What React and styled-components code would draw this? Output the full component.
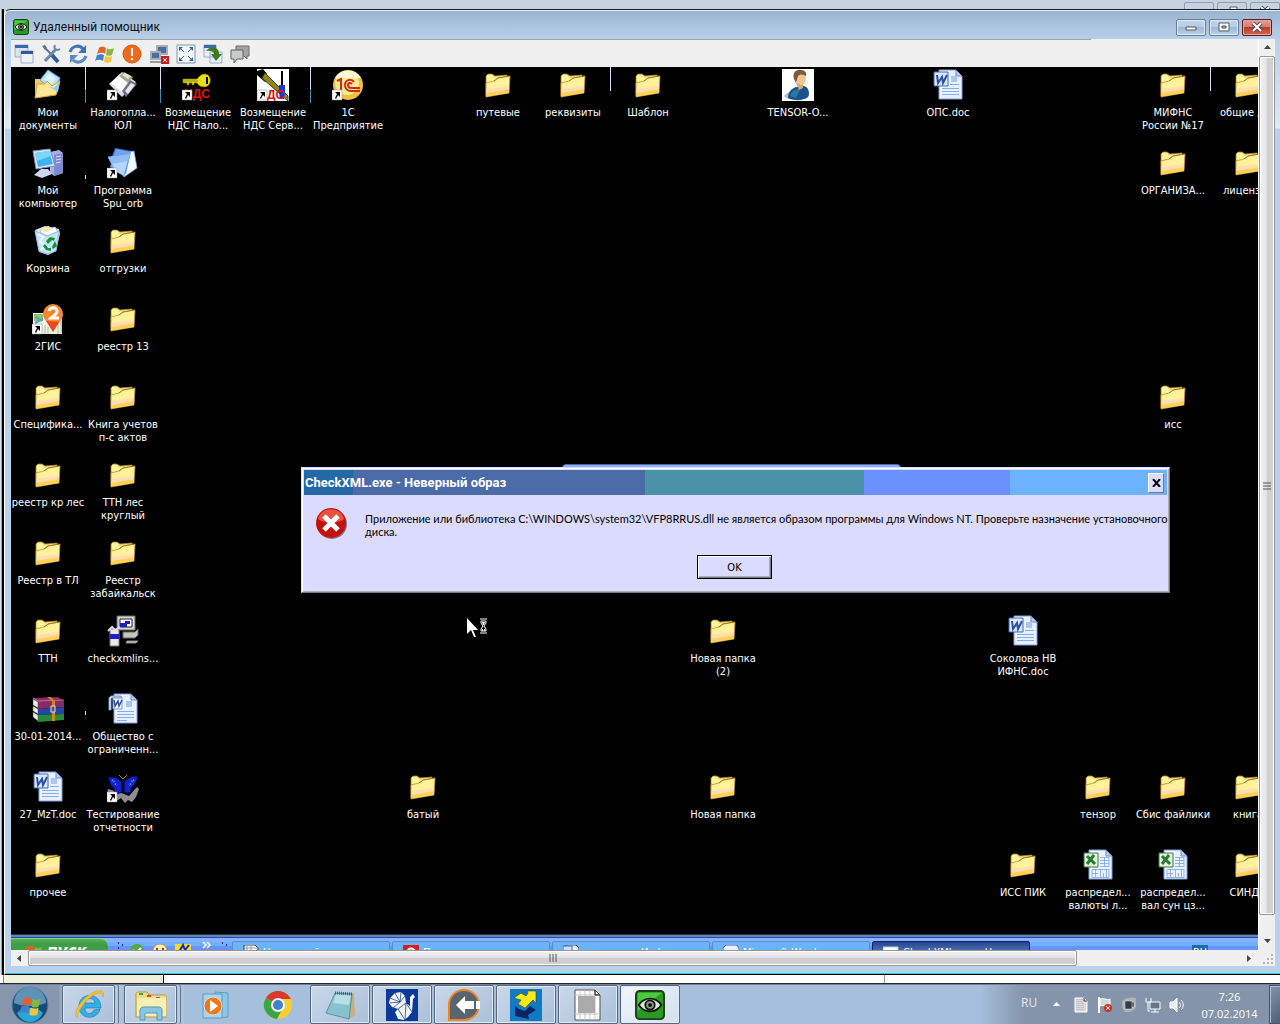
import React from 'react';
import styled, { createGlobalStyle } from 'styled-components';

const GlobalStyle = createGlobalStyle`
    * { box-sizing: border-box; }
    body {
        margin: 0;
        background: #c5d3e0;
        font-family: "Open Sans", "Noto Sans", sans-serif;
        font-size: 12px;
        overflow: hidden;
    }
    button { font: inherit; margin: 0; padding: 0; border: none; background: none; color: inherit; }
    svg { display: block; flex: none; }
`

const tahoma = '"DejaVu Sans Condensed", "DejaVu Sans", "Noto Sans", sans-serif';

const Screen = styled.div`
    min-height: 100vh;
    display: flex;
    flex-direction: column;
`
const BackCaption = styled.div`
    height: 9px;
    padding-top: 2px;
    display: flex;
    justify-content: flex-end;
    gap: 3px;
    overflow: hidden;
    background: #c5d3e0;
`
const Middle = styled.div`
    flex: 1;
    display: flex;
    background: #c5d3e0;
`
const Gutter = styled.div`
    width: 4px;
    border-left: 1px solid #d8e4ee;
    background: linear-gradient(to right, #3fc4e0 1px, #000 1px);
`
const Window = styled.main`
    flex: 1;
    min-width: 0;
    display: flex;
    flex-direction: column;
    padding: 1px 5px 8px 6px;
    border-top: 1px solid #1b1f26;
    border-left: 1px solid #fff;
    border-bottom: 1px solid #000;
    border-top-left-radius: 6px;
    box-shadow: inset 0 -1px 0 #27c9e6, inset 0 1px 0 #e4eef8;
    background: linear-gradient(#99b4d1 0, #b9d1ea 30px, #dde9f6 118px, #b9d1ea 119px);
`
const TitleBar = styled.header`
    height: 28px;
    display: flex;
    align-items: center;
    gap: 4px;
    padding: 4px 3px 0 2px;
`
const Title = styled.h1`
    flex: 1;
    margin: 0;
    font-family: Roboto, "Open Sans", sans-serif;
    font-size: 12px;
    line-height: 16px;
    font-weight: normal;
    color: #0c0c14;
`
const Caption = styled.div`
    display: flex;
    gap: 3px;
`
const CaptionButton = styled.button`
    width: 30px;
    height: 17px;
    flex: none;
    display: flex;
    align-items: center;
    justify-content: center;
    border: 1px solid ${p => p.$close ? '#5b1c22' : '#6b7d93'};
    border-radius: 2px;
    box-shadow: inset 0 0 0 1px ${p => p.$close ? '#e5a799' : '#dce8f4'};
    background: ${p => p.$close
        ? 'linear-gradient(#e0a095 0, #d67f70 45%, #bc3a25 50%, #cf6a50 100%)'
        : 'linear-gradient(#c3d6ea 0, #b6cbe2 45%, #9fb9d5 50%, #b7d0ea 100%)'};
`
const BackButton = styled(CaptionButton)`
    align-items: flex-start;
    padding-top: 3px;
    background: #c5d3e0;
    border-color: #8f9dad;
    box-shadow: none;
`
const Client = styled.div`
    flex: 1;
    min-height: 0;
    display: grid;
    grid-template-columns: minmax(0, 1fr) 17px;
    grid-template-rows: minmax(0, 1fr) 16px;
`
const View = styled.div`
    display: flex;
    flex-direction: column;
    min-height: 0;
`
const Toolbar = styled.div`
    height: 28px;
    display: flex;
    align-items: center;
    gap: 7px;
    padding: 2px 3px 0;
    background: linear-gradient(#a0a0a0, #a0a0a0) no-repeat 0 0 / 1080px 1px, #f0f0f0;
`
const ToolButton = styled.button`
    width: 20px;
    height: 20px;
`
const Desktop = styled.section`
    position: relative;
    flex: 1;
    overflow: hidden;
    padding-top: 2px;
    background: #000;
    color: #fff;
    font-family: ${tahoma};
    font-size: 11px;
    line-height: 13px;
`
const IconGrid = styled.div`
    display: grid;
    grid-template-columns: repeat(17, 74px);
    grid-template-rows: repeat(11, 78px);
    column-gap: 1px;
`
const Shortcut = styled.button`
    grid-column: ${p => p.$col};
    grid-row: ${p => p.$row};
    display: flex;
    flex-direction: column;
    align-items: center;
    gap: 5px;
    white-space: pre;
    text-align: center;
`
const Tick = styled.i`
    position: absolute;
    left: ${p => p.$x}px;
    top: ${p => p.$y}px;
    width: 1px;
    height: ${p => p.$h}px;
    background: ${p => p.$h > 30 ? 'linear-gradient(#dcdcff 60%, #3b8fb5 62%)' : '#dcdcff'};
`
const HiddenWindow = styled.div`
    position: absolute;
    left: 551px;
    right: 357px;
    top: 397px;
    height: 8px;
    border: 1px solid #4a6ba8;
    border-radius: 4px 4px 0 0;
    background: #8cb0ff;
`
const Pointer = styled.div`
    position: absolute;
    left: 455px;
    top: 551px;
`
const Dialog = styled.div`
    position: absolute;
    left: 290px;
    right: 88px;
    top: 400px;
    padding: 1px;
    border: 1px solid;
    border-color: #dad9ff #77778a #77778a #dad9ff;
    box-shadow: inset 1px 1px 0 #fff, inset -1px -1px 0 #adadb5;
    background: #dbdaff;
    color: #000;
`
const DialogTitle = styled.div`
    height: 25px;
    margin: 1px 1px 0;
    padding: 0 3px 0 1px;
    display: flex;
    align-items: center;
    justify-content: space-between;
    color: #fff;
    font-family: Roboto, "Open Sans", sans-serif;
    font-size: 13px;
    font-weight: bold;
    background: linear-gradient(to right, #2369a5 49px, #4a6ba8 49px, #4a6ba8 341px, #4a92a8 341px, #4a92a8 560px, #6b90ff 560px, #6b90ff 706px, #6bb3ff 706px);
`
const DialogClose = styled.button`
    width: 16px;
    height: 20px;
    display: flex;
    align-items: center;
    justify-content: center;
    border: 1px solid;
    border-color: #fff #77778a #77778a #fff;
    background: #dbdaff;
`
const DialogBody = styled.div`
    display: flex;
    gap: 18px;
    padding: 12px 0 0 12px;
`
const Message = styled.p`
    flex: 1;
    margin: 0;
    padding-top: 5px;
    font-family: Lato, "Liberation Sans", Arial, sans-serif;
`
const DialogFooter = styled.div`
    display: flex;
    justify-content: center;
    padding: 16px 2px 12px 0;
`
const OkButton = styled.button`
    width: 75px;
    height: 24px;
    border: 1px solid #000;
    box-shadow: inset 1px 1px 0 #fff, inset -1px -1px 0 #77778a, inset -2px -2px 0 #adadb5;
`
const XpBar = styled.div`
    height: 16px;
    overflow: hidden;
    display: flex;
    background: linear-gradient(#24420f 0, #24420f 1px, #5b85dd 1px, #5b85dd 3px, #2447a3 3px, #2447a3 4px, #8cb0ff 4px, #8cb0ff 8px, #6bb3ff 8px, #6bb3ff 12px, #6b90ff 12px);
    color: #fff;
    font-family: ${tahoma};
    font-size: 11px;
    line-height: 13px;
`
const XpStart = styled.button`
    width: 97px;
    height: 30px;
    margin-top: 4px;
    padding: 4px 0 0 12px;
    display: flex;
    gap: 4px;
    align-items: flex-start;
    border-top: 1px solid #8fcf8f;
    border-radius: 0 8px 0 0;
    background: linear-gradient(#58b058 0, #3f9c45 5px, #48b048 30px);
    font-size: 17px;
    line-height: 17px;
    font-weight: bold;
    font-style: italic;
`
const XpQuick = styled.div`
    width: 124px;
    padding: 8px 0 0 9px;
`
const XpTask = styled.button`
    width: 158px;
    height: 24px;
    margin: 7px 2px 0 0;
    padding: 3px 10px;
    display: flex;
    gap: 4px;
    flex: none;
    border: 1px solid ${p => p.$active ? '#10246b' : '#5c8ec0'};
    border-radius: 2px;
    background: ${p => p.$active ? 'linear-gradient(#23458f, #4a6ba8 8px)' : '#6bb3ff'};
    white-space: nowrap;
    line-height: 15px;
`
const XpLang = styled.span`
    height: 16px;
    margin: 11px 50px 0 auto;
    padding: 1px 1px 0;
    background: #2369a5;
`
const VScroll = styled.div`
    display: flex;
    flex-direction: column;
    align-items: center;
    border-left: 1px solid #fff;
    background: #f0f0f0;
`
const HScroll = styled.div`
    display: flex;
    align-items: center;
    background: #f0f0f0;
`
const Arrow = styled.button`
    width: 17px;
    height: 17px;
    flex: none;
    display: flex;
    align-items: center;
    justify-content: center;
`
const Thumb = styled.div`
    flex: ${p => p.$size};
    align-self: stretch;
    display: flex;
    align-items: center;
    justify-content: center;
    border: 1px solid #979797;
    border-radius: 2px;
    box-shadow: inset 0 0 0 1px #fff;
    background: linear-gradient(${p => p.$vertical ? 'to right' : 'to bottom'}, #f3f3f3 0, #e4e4e6 45%, #cfcfd1 52%, #d2d2d4 100%);
`
const Rest = styled.div`
    flex: ${p => p.$size};
`
const Corner = styled.div`
    display: flex;
    align-items: flex-end;
    justify-content: flex-end;
    background: #f0f0f0;
`
const BackStatus = styled.div`
    height: 9px;
    padding-left: 3px;
    display: flex;
    border-bottom: 1px solid #23272e;
    background: #fff;
`
const StatusCell = styled.div`
    width: 161px;
    border-right: 1px solid #000;
    border-left: 1px solid #8d8d80;
    background: #f0f0dc;
`
const StatusPage = styled.div`
    width: 721px;
    border-right: 1px solid #8aa094;
`
const Taskbar = styled.nav`
    height: 40px;
    display: flex;
    border-top: 1px solid #6e7f96;
    background: linear-gradient(to right, #8596ae 0, #8596ae 58px, #a6bfdc 64px, #a6bfdc calc(100% - 300px), #8394ab calc(100% - 255px));
`
const Start = styled.button`
    width: 60px;
    display: flex;
    align-items: center;
    justify-content: center;
`
const Pins = styled.div`
    flex: 1;
    display: flex;
    gap: 2px;
    padding-left: 2px;
`
const TaskButton = styled.button`
    width: ${p => p.$stack ? 53 : 60}px;
    margin-right: ${p => p.$stack ? 7 : 0}px;
    display: flex;
    align-items: center;
    justify-content: center;
    border: 1px solid ${p => p.$open ? '#56677f' : 'transparent'};
    border-radius: 2px;
    box-shadow: ${p => p.$open ? 'inset 0 0 0 1px #dfe9f4' : 'none'}${p => p.$stack ? ', 3px 0 0 #b6c8de, 4px 0 0 #64758c, 7px 0 0 #b0c4dc' : ''};
    background: ${p => p.$active ? 'linear-gradient(135deg, #f1f6fb, #d3e0ef)' : p.$open ? 'linear-gradient(135deg, #c9d8e9, #aac0da)' : 'none'};
`
const Tray = styled.div`
    display: flex;
    align-items: center;
    color: #fff;
    font-size: 11px;
`
const Lang = styled.span`
    width: 27px;
    padding-bottom: 5px;
    font-size: 12px;
    color: #e2e8ef;
`
const TrayIcons = styled.div`
    display: flex;
    gap: 8px;
    padding-left: 8px;
`
const Clock = styled.time`
    width: 84px;
    padding-left: 5px;
    text-align: center;
    line-height: 17px;
`
const ShowDesktop = styled.button`
    width: 11px;
    align-self: stretch;
    border: 1px solid #46556a;
    border-right: none;
    box-shadow: inset 1px 1px 0 #aebccd;
    background: linear-gradient(135deg, #8495ab, #506076);
`

const Svg = ({ s = 32, box = 32, children }) => (
    <svg width={s} height={s} viewBox={`0 0 ${box} ${box}`} fill="none" aria-hidden="true">{children}</svg>
);

const LinkArrow = () => <>
    <path d="M0 21h10v10H0z" fill="#fff" stroke="#888" strokeWidth=".5" />
    <path d="M3 23h5v5l-2-2-2 4-1-1 2-4z" fill="#000" />
</>;

const Folder = () => (
    <Svg>
        <path d="M4 7l2-2h4l3 2 12-1v17L4 27z" fill="#f9e07c" stroke="#b48a2a" strokeWidth=".7" />
        <path d="M5 9V6h5l2 3 13-2v3L5 13z" fill="#fff59c" />
        <path d="M4 28V14l8-2 4-3 12-2-1 17z" fill="#fff29b" stroke="#c4922b" strokeWidth=".8" />
        <path d="M4.500 24v-4L27 17v3z" fill="#ffdcb8" />
        <path d="M4.500 27.500V24L27 20v4z" fill="#ffd257" />
        <path d="M12 12 16 9l11-2" stroke="#8d6a14" strokeWidth=".8" />
    </Svg>
);

const Documents = () => (
    <Svg>
        <path d="M3 10h9l2 4 14-4-3 15L3 29z" fill="#f5cc65" />
        <path d="m8 11 8-10 12 8-7 13z" fill="#b9e2fb" stroke="#5ea6df" />
        <path d="m12 10 5-6 7 5-5 7z" fill="#d9f3ff" />
        <path d="m3 29 2-14h8l2-3 5 5 8-5-4 14z" fill="#ffe79a" stroke="#d79f34" />
        <path d="m16 17 6 2 6-7-2 11z" fill="#8fcdf5" />
    </Svg>
);

const Computer = () => (
    <Svg>
        <path d="m18 5 9-2 4 3v20l-9 3-4-4z" fill="#a6afe8" />
        <path d="m22 8 9-2v20l-9 3z" fill="#7e8ace" />
        <path d="m24 10 5-1M24 13l5-1M24 16l5-1" stroke="#dde2ff" />
        <path d="m1 4 17-2 5 17-19 3z" fill="#dce4fb" stroke="#8390bd" />
        <path d="m3 6 14-2 4 13-15 3z" fill="#3fb3f1" />
        <path d="m3 6 14-2 2 5-14 5z" fill="#7ad5fb" />
        <path d="M9 22h7l4 5-10 4-8-3z" fill="#cfd6ef" />
    </Svg>
);

const Recycle = () => (
    <Svg>
        <path d="m3 5 10-4 14 3 1 5-4 17-8 4-9-3z" fill="#cfe6f7" />
        <path d="m8 7 5-5 7 1 3-1 3 5-9 5z" fill="#fff" stroke="#bcc6cf" />
        <path d="m9 3 8-2 2 4-7 3z" fill="#f7e8ae" />
        <path d="m3 6 12 5 12-5-3 20-8 3-9-3z" fill="#c6e4fa" fillOpacity=".8" stroke="#8cbbe0" />
        <path d="m6 9 5 3-3 5 5 3-4 5" stroke="#f4faff" strokeWidth="2" />
        <path d="m14 16 4-4 5 1-1 3-2-1-4 4zM23 16l2 5-4 3-1-2 1-2zM13 19l3 4h3v3l-5-1-3-4z" fill="#14942d" />
    </Svg>
);

const Floppies = () => (
    <Svg>
        <path d="m2 15 13-12 14 10-14 15z" fill="#dfdfe3" />
        <path d="m4 14 9-9 10 7-8 11z" fill="#fff" />
        <path d="m12 7 5-4 9 5-5 6z" fill="#a9a58e" />
        <path d="m15 6 3-2 6 3-3 3z" fill="#e8e4cb" />
        <path d="m15 22 8-11 7 4-11 13z" fill="#6e7180" />
        <path d="m18 22 6-8 4 2-7 9z" fill="#e7e7f3" />
        <LinkArrow />
    </Svg>
);

const Spu = () => (
    <Svg>
        <path d="m8 1 17 3 3 5-14 8L5 9z" fill="#3c6fd0" />
        <path d="m22 5 5-1 3 17-13 9-3-5z" fill="#f2f8ff" stroke="#7ba4ea" strokeWidth=".7" />
        <path d="m9 2 15 3-5 22-16-7z" fill="#6ea5f0" />
        <path d="m1 10 22-3-6 22-9-5z" fill="#b5d6fc" stroke="#5c8ee0" strokeWidth=".7" />
        <path d="m1 10 22-3-2 7-16 3z" fill="#8fbef6" />
        <LinkArrow />
    </Svg>
);

const KeyVat = () => (
    <Svg>
        <text x="2" y="29" fill="#e01010" fontFamily="Liberation Sans" fontWeight="bold" fontSize="12">НДС</text>
        <path d="M1 10h14c2-3 5-5 7-5 8-1 9 13 0 13-3 0-5-1-7-4h-3v2h-2v-2H7v2H5v-2H1z" fill="#e8de12" stroke="#6a6408" strokeWidth=".7" />
        <path d="M2 12h14" stroke="#8a8210" />
        <path d="M24 8h2v7h-2z" fill="#000" />
        <LinkArrow />
    </Svg>
);

const HammerVat = () => (
    <Svg>
        <path d="M0 0h32v32H0z" fill="#fff" />
        <path d="M0 2 6 0l4 5-2 3 3 3-3 2-8-7z" fill="#000" />
        <path d="m8 4 23 23v5L5 9z" fill="#90861c" stroke="#443f08" />
        <path d="M24 2h2v14h-2z" fill="#000" />
        <path d="M22 16h6v7l-1 7h-4l-1-7z" fill="#1636d6" />
        <text x="10" y="30" fill="#e01010" fontFamily="Liberation Sans" fontWeight="bold" fontSize="12">ДС</text>
        <LinkArrow />
    </Svg>
);

const OneC = () => (
    <Svg>
        <circle cx="16" cy="16" r="15" fill="#f0c040" />
        <circle cx="15" cy="14" r="12" fill="#ffe990" />
        <path d="M3 9a15 15 0 0 1 26 0z" fill="#fff9d6" />
        <path d="m5 12 4-2v12M22 13c-3-4-9-2-9 3 0 4 3 6 6 6h9M20 15c-2-2-4-1-4 1 0 3 2 3 4 3h8" stroke="#d3281c" strokeWidth="2" />
        <LinkArrow />
    </Svg>
);

const Person = () => (
    <Svg>
        <path d="M0 0h32v32H0z" fill="#fff" />
        <path d="M2 27c2-3 6-5 9-4l3 7c-5 1-10 0-12-3z" fill="#b9c0c4" />
        <path d="M6 29c0-6 3-9 8-11l8-1c5 1 6 8 4 11-5 4-14 4-20 1z" fill="#1a528d" />
        <path d="M8 27c1-4 5-7 10-7l-4 9z" fill="#2b7a9e" />
        <path d="m14 14 7-1v6l-4 2z" fill="#d8a877" />
        <ellipse cx="19" cy="9" rx="5" ry="7" fill="#efc796" />
        <path d="M12 10C10 4 14 0 19 1c4 0 6 3 5 6-3-2-6-2-8 0l-2 7z" fill="#7f5b34" />
    </Svg>
);

const Sheet = () => <>
    <path d="M7 1h17l6 6v23H7z" fill="#e8f2ff" stroke="#7f9fe0" />
    <path d="M9 2h8l-8 20z" fill="#fff" />
    <path d="M24 1v6h6z" fill="#b7cdf5" stroke="#6f8cc8" />
</>;

const Word = () => (
    <Svg>
        <Sheet />
        <path d="M19 7h6v6h-6z" fill="#a9c5f3" />
        <path d="M18 15.500h9M10 19.500h17M10 22.500h17M10 25.500h17" stroke="#86abef" />
        <path d="M2 3h14v14H2z" fill="#dce9ff" stroke="#3c68bd" />
        <path d="m5 6 1 8 4-6 1 6 4-8" stroke="#2b4fa8" strokeWidth="2" />
    </Svg>
);

const Rtf = () => (
    <Svg>
        <Sheet />
        <path d="M19 8h6v6h-6z" fill="#a9c5f3" />
        <path d="M10 18.500h17M10 21.500h17M10 24.500h17M10 27.500h10" stroke="#86abef" />
        <path d="M4 3h10v2H4v12H2V5zM6 4h9v12H6z" fill="#eef5ff" stroke="#7a9bd4" />
        <path d="m7 7 1 6 3-5 1 5 3-6" stroke="#2b4fa8" strokeWidth="1.5" />
    </Svg>
);

const Excel = () => (
    <Svg>
        <Sheet />
        <path d="M18 8.500h9v9h-9M18 11.500h9M18 14.500h9M22.500 8v10M10 20.500h17v8H10zM10 24.500h6M13.500 20v8M18.500 20v8M21.500 24v4M24.500 20v8" stroke="#7ba2ee" strokeWidth=".8" />
        <path d="M2 4h14v14H2z" fill="#e3f2dd" stroke="#3a7a3a" />
        <path d="m5 7 8 8M12 6l-7 9" stroke="#2a7a33" strokeWidth="3" />
    </Svg>
);

const TwoGis = () => (
    <Svg>
        <path d="M1 10h29v21H1z" fill="#eef3e2" />
        <path d="M2 11h9v7H2z" fill="#8cc56a" />
        <path d="m3 20 8-4M4 14l6 4" stroke="#57a5cc" strokeWidth="2" />
        <path d="M13 22v9M16 24v7M26 20v11M29 18v12" stroke="#b9b2a0" />
        <path d="M11 11a10 10 0 1 1 20 0c0 7-6 9-10 18-2-9-10-11-10-18z" fill="#f7892c" />
        <path d="m14 18 7 11 6-10z" fill="#e9481c" />
        <path d="M17 8c1-5 9-4 8 1-1 3-4 4-6 6h8" stroke="#fff" strokeWidth="3" />
        <LinkArrow />
    </Svg>
);

const Installer = () => (
    <Svg>
        <path d="M10 1h18v14H10z" fill="#d5d5dd" stroke="#666" />
        <path d="M13 4h12v8H13z" fill="#fff" stroke="#222" />
        <path d="M13 8h5V6h5v3h-3v3h-7z" fill="#1220c4" />
        <path d="M16 17h12l3-3v6l-3 3H16z" fill="#c4c4cc" stroke="#666" />
        <path d="M19 28h10l2-2H20z" fill="#d5d5dd" stroke="#888" />
        <path d="M21 19h6" stroke="#d8d030" />
        <path d="M3 14h9v17H3z" fill="#e8e8ee" stroke="#777" />
        <path d="M3 19h9v5H3z" fill="#1b22cc" />
        <path d="m1 16 4-4 3 3 5-3" stroke="#ddd" strokeWidth="2" />
    </Svg>
);

const Rar = () => (
    <Svg>
        <path d="m1 5 25-1 6 4v6l-26 2z" fill="#8a2a63" />
        <path d="m1 13 5 3 26-2v7l-26 1z" fill="#2546a8" />
        <path d="m1 19 5 3 26-1v6l-26 2z" fill="#278a35" />
        <path d="m1 6 5 3v6l-5-3zM1 13l5 3v5l-5-3zM1 19l5 3v6l-5-4z" fill="#eee" stroke="#443" strokeWidth=".5" />
        <path d="m1 5 5 3 26-1" stroke="#c86aa0" />
        <path d="m15 4 5 4v20h3V8l-4-4z" fill="#c68a1e" />
        <path d="M19 13h4v6h-4z" fill="#555" stroke="#ddd" />
    </Svg>
);

const Butterfly = () => (
    <Svg>
        <path d="m1 18 7 2 9 3 5 2 8-9 2 2-3 8-4 5-4-2-3 3-4-5-6 4-8-6z" fill="#8f8f92" />
        <path d="M16 13C12 6 6 6 1 6c2 5 2 9 6 11-1 6 5 7 9 3 4 4 9 2 8-3 5-3 5-7 7-11-5-1-11 0-15 7z" fill="#1420c8" stroke="#050850" />
        <path d="m5 9 3 2M8 13l2 1M27 9l-3 2M24 13l-2 1" stroke="#4fb0ef" strokeWidth="2" strokeDasharray="1 1" />
        <path d="M16 10v12" stroke="#05062c" strokeWidth="3" />
        <path d="m12 4 4 4 4-4" stroke="#8c8c60" />
        <LinkArrow />
    </Svg>
);

const Flag = () => <>
    <path d="M4 4c3-2 5-1 7 0l-1 6c-3-2-5-1-8 0z" fill="#e2602c" />
    <path d="M12 4c2 2 5 1 7 0l-2 7c-2 1-4 1-6 0z" fill="#84b840" />
    <path d="M2 11c3-1 5-1 7 0l-1 6c-2-1-5-2-8 0z" fill="#3f81c8" />
    <path d="M10 12c3 1 5 1 7 0l-1 6c-3 1-5 1-7 0z" fill="#f5c43a" />
</>;

const Eye = ({ s }) => (
    <Svg s={s}>
        <rect x="1" y="1" width="30" height="30" rx="4" fill="#2a9a22" stroke="#1d3f1a" strokeWidth="2" />
        <path d="M3 3h26L3 22z" fill="#4cc93c" />
        <path d="M4 16c6-9 18-9 24 0-6 9-18 9-24 0z" fill="#d9ecd5" stroke="#0c140b" strokeWidth="2" />
        <circle cx="16" cy="16" r="5" fill="#889a88" stroke="#111" strokeWidth="2" />
        <circle cx="16" cy="16" r="2" fill="#000" />
    </Svg>
);

const tools = [
    ['Окна', <>
        <path d="M1 1h13v12H1z" fill="#dbe5f2" stroke="#9fb0c8" /><path d="M1 1h13v3H1z" fill="#3c6aa8" />
        <path d="M7 7h12v12H7z" fill="#edf2f8" stroke="#9fb0c8" /><path d="M7 7h12v3H7z" fill="#2e5c9c" />
    </>],
    ['Настройка', <>
        <path d="m3 3 9 9" stroke="#5a7599" strokeWidth="2" /><path d="m11 11 6 7" stroke="#2e5c9c" strokeWidth="4" />
        <path d="M15 5 4 17" stroke="#6c87a8" strokeWidth="3" /><path d="M14 1c-2 4 2 6 5 4" stroke="#6c87a8" strokeWidth="2" />
        <path d="m1 2 3-1 2 3-2 2z" fill="#5a7599" />
    </>],
    ['Обновить', <>
        <path d="M2 8c2-6 9-8 13-3" stroke="#3f74b4" strokeWidth="3" /><path d="M18 1v8h-8z" fill="#3f74b4" />
        <path d="M18 12c-2 6-9 8-13 4" stroke="#5b8ac2" strokeWidth="3" /><path d="M2 19v-8h8z" fill="#5b8ac2" />
    </>],
    ['Пуск', <Flag />],
    ['Внимание', <>
        <circle cx="10" cy="10" r="9" fill="#ee6b1a" stroke="#d9520b" /><path d="M10 4v8M10 14v2" stroke="#fff" strokeWidth="2" />
    </>],
    ['Отключить', <>
        <path d="M8 2h10v8H8z" fill="#4a6ea2" stroke="#a9adb4" strokeWidth="2" /><path d="M2 8h9v7H2z" fill="#4a6ea2" stroke="#a9adb4" strokeWidth="2" />
        <path d="M1 18h12" stroke="#9a9a9a" strokeWidth="2" />
        <path d="M12 12h8v8h-8z" fill="#cf1b1b" /><path d="m14 14 4 4M18 14l-4 4" stroke="#fff" />
    </>],
    ['Во весь экран', <>
        <path d="M1 1h18v18H1z" fill="#f4f8fc" stroke="#8195b0" />
        <path d="M3 7V3h4zM13 3h4v4zM3 13v4h4zM17 13v4h-4z" fill="#2d66ad" />
        <path d="m4 4 4 4M16 4l-4 4M4 16l4-4M16 16l-4-4" stroke="#2d66ad" />
    </>],
    ['Передать файл', <>
        <path d="M1 1h12v12H1zM7 8h12v11H7z" fill="#e9eef5" stroke="#9aaccb" /><path d="M1 1h12v3H1z" fill="#3c6aa8" />
        <path d="M3 7c4-6 13-5 13 3h3l-6 7-5-7h3c0-3-4-4-8-3z" fill="#3e7a22" />
    </>],
    ['Чат', <>
        <path d="M6 2h13v10h-2v3l-3-3H6z" fill="#a4a4a4" stroke="#6d6d6d" /><path d="M1 6h12v9H7l-3 4v-4H1z" fill="#c9cbcb" stroke="#5f6262" />
    </>],
];

const shortcuts = [
    [1, 1, Documents, 'Мои\nдокументы'],
    [2, 1, Floppies, 'Налогопла...\nЮЛ'],
    [3, 1, KeyVat, 'Возмещение\nНДС Нало...'],
    [4, 1, HammerVat, 'Возмещение\nНДС Серв...'],
    [5, 1, OneC, '1С\nПредприятие'],
    [7, 1, Folder, 'путевые'],
    [8, 1, Folder, 'реквизиты'],
    [9, 1, Folder, 'Шаблон'],
    [11, 1, Person, 'TENSOR-O...'],
    [13, 1, Word, 'ОПС.doc'],
    [16, 1, Folder, 'МИФНС\nРоссии №17'],
    [17, 1, Folder, 'общие док'],
    [1, 2, Computer, 'Мой\nкомпьютер'],
    [2, 2, Spu, 'Программа\nSpu_orb'],
    [16, 2, Folder, 'ОРГАНИЗА...'],
    [17, 2, Folder, 'лицензии'],
    [1, 3, Recycle, 'Корзина'],
    [2, 3, Folder, 'отгрузки'],
    [1, 4, TwoGis, '2ГИС'],
    [2, 4, Folder, 'реестр 13'],
    [1, 5, Folder, 'Специфика...'],
    [2, 5, Folder, 'Книга учетов\nп-с актов'],
    [16, 5, Folder, 'исс'],
    [1, 6, Folder, 'реестр кр лес'],
    [2, 6, Folder, 'ТТН лес\nкруглый'],
    [1, 7, Folder, 'Реестр в ТЛ'],
    [2, 7, Folder, 'Реестр\nзабайкальск'],
    [1, 8, Folder, 'ТТН'],
    [2, 8, Installer, 'checkxmlins...'],
    [10, 8, Folder, 'Новая папка\n(2)'],
    [14, 8, Word, 'Соколова НВ\nИФНС.doc'],
    [1, 9, Rar, '30-01-2014...'],
    [2, 9, Rtf, 'Общество с\nограниченн...'],
    [1, 10, Word, '27_MzT.doc'],
    [2, 10, Butterfly, 'Тестирование\nотчетности'],
    [6, 10, Folder, 'батый'],
    [10, 10, Folder, 'Новая папка'],
    [15, 10, Folder, 'тензор'],
    [16, 10, Folder, 'Сбис файлики'],
    [17, 10, Folder, 'книга'],
    [1, 11, Folder, 'прочее'],
    [14, 11, Folder, 'ИСС ПИК'],
    [15, 11, Excel, 'распредел...\nвалюты л...'],
    [16, 11, Excel, 'распредел...\nвал сун цз...'],
    [17, 11, Folder, 'СИНДИ'],
];

const ticks = [[74, 0, 36], [149, 0, 36], [299, 0, 36], [599, 0, 24], [1199, 0, 24], [74, 108, 4], [74, 644, 4]];

const xpTasks = [
    ['Налоговый', <><path d="M1 0h11l3 3v13H1z" fill="#fff" stroke="#333" /><path d="M4 0v16M8 0v16M1 3h14" stroke="#999" /></>],
    ['Почта', <><path d="M0 0h16v16H0z" fill="#d81e1e" /><path d="M4 8c0-6 8-6 8 0" stroke="#fff" strokeWidth="2" /></>],
    ['счет-ра на Инф.', <><path d="M3 0h10l3 3v13H3z" fill="#eef" stroke="#345" /><path d="M0 1h9v9H0z" fill="#cfe0ff" stroke="#3c68bd" /></>],
    ['Microsoft Word', <path d="M3 0h11l2 3v13H0V3z" fill="#eef" stroke="#3c5a9a" />],
    ['CheckXML.exe - Не...', <path d="M0 2h15v12H0z" fill="#fff" stroke="#bcd" />, true],
];

const pins = [
    { name: 'Internet Explorer', open: true, stack: true, art: <>
        <path d="M27 20c-2 11-21 12-21-3 0-14 22-15 22 2H12c0 7 7 7 9 2zM12 14h10c-1-6-9-6-10 0z" fill="#35aee8" stroke="#1a7fc0" strokeWidth=".7" />
        <path d="M5 29c-9-3 10-30 24-27 2 1 2 4 1 6 0-8-12-3-20 8-5 7-7 12-5 13z" fill="#f7c22d" stroke="#d99812" strokeWidth=".5" />
    </> },
    { name: 'Проводник', open: true, stack: true, art: <>
        <path d="M1 5c0-2 1-2 3-2h8l2 3h16c1 0 2 1 2 2v20H1z" fill="#f4dc8b" stroke="#b99a45" />
        <path d="M4 4h4v2H4z" fill="#2fa84c" /><path d="M12 6h4v2h-4z" fill="#d84b2b" /><path d="M21 8h4v2h-4z" fill="#2b7fd0" />
        <path d="M2 9h29v18H2z" fill="#fbeeb2" />
        <path d="M5 31V21c0-2 2-3 4-3h14c3 0 4 1 4 3v10h-5v-7H10v7z" fill="#86c7e6" stroke="#5399bf" />
    </> },
    { name: 'Проигрыватель', art: <>
        <path d="m15 3 13 1v24l-13 1z" fill="#8dc5e4" stroke="#5b9cc4" /><path d="M3 5h19v24H3z" fill="#a9d4ea" stroke="#5b9cc4" />
        <circle cx="13" cy="17" r="9" fill="#f07818" stroke="#d9dde0" /><path d="m10 11 8 6-8 6z" fill="#fff" />
    </> },
    { name: 'Chrome', art: <>
        <circle cx="16" cy="16" r="14" fill="#f7cf2e" />
        <path d="M16 16 4 9c5-9 19-10 25 1H16z" fill="#d93a2b" /><path d="M4 9c-6 9 1 20 11 21l6-11-5-3z" fill="#3aa545" />
        <circle cx="16" cy="16" r="7" fill="#f3f5f6" /><circle cx="16" cy="16" r="5" fill="#4081cf" />
    </> },
    { name: 'Блокнот', open: true, art: <>
        <path d="m26 5 4-1 1 22-7 5z" fill="#c6b184" /><path d="m11 4 17 1-3 25-23-6z" fill="#87c3cf" stroke="#4c7885" strokeWidth=".7" />
        <path d="m12 5 15 1-2 10-16-2z" fill="#b7dfe5" /><path d="m11 4 17 1" stroke="#555" strokeWidth="3" strokeDasharray="1 1" />
    </> },
    { name: 'Оригами', open: true, art: <>
        <path d="M0 0h32v32H0z" fill="#0c3897" />
        <path d="m4 9 5-5 6-1 4 4 1 7 4 3v-9l3-3 2 3-2 2-1 13-4 5-4 3-6-1-3-7 3-3-6-2-3-4z" fill="#f0f5fb" />
        <path d="m4 9 10 4-5-9M14 13l1-10M14 13l-10 1M14 13l-8 7M14 13l5-6M12 20l8-6-1 17M12 20l7 11M20 14l6 9" stroke="#24468d" strokeWidth=".8" />
    </> },
    { name: 'Помощник', open: true, art: <>
        <path d="M1 31V16a15 15 0 1 1 15 15z" fill="#58646e" stroke="#f08322" strokeWidth="2" />
        <path d="m8 16 9-9v5h9v8h-9v5zM28 12h4v8h-4z" fill="#fff" />
    </> },
    { name: 'Обмен', open: true, art: <>
        <path d="M0 0h32v32H0z" fill="#117ac4" />
        <path d="m4 9 7-5 5 3 2-3-1-2h9v12l-3-3-8 8-7-4 3-4z" fill="#f5ea18" stroke="#332" strokeWidth=".5" />
        <path d="m5 17 4 3 6 2 5-5 6 4-8 5 1 4-14-3z" fill="#0b2564" />
    </> },
    { name: 'Документ', open: true, art: <>
        <path d="M3 1h20l5 5v25H3z" fill="#fff" stroke="#555" /><path d="M8 1v30M13 1v30M18 1v30M23 1v30M3 6h25M3 25h25" stroke="#c6c6c6" />
        <path d="M6 7h17v17H6z" fill="#aaa" /><path d="M23 1v5h5" stroke="#000" />
    </> },
];

const trayIcons = [
    <><path d="M2 1h9l3 3v11H2z" fill="#dcdcdc" stroke="#fff" /><path d="M11 1v3h3" stroke="#444" /><path d="M4 2v12M6 2v12M8 2v12M10 2v12" stroke="#aaa" strokeDasharray="1 1" /></>,
    <><path d="M2 0v16" stroke="#fff" strokeWidth="2" /><path d="M3 2c4-2 6 2 10 0v7c-4 2-6-2-10 0z" fill="#cfd7df" stroke="#fff" /><circle cx="11" cy="11" r="4" fill="#d62f20" /><path d="m9 9 4 4M13 9l-4 4" stroke="#fff" /></>,
    <><path d="M1 4c4-4 10-4 14-3v9c-2 5-7 5-11 5-3-2-3-7-3-11z" fill="#a9b3b8" /><path d="M4 4h7v8H4zM11 5h2v5h-2" fill="#333c42" stroke="#eee" strokeWidth=".5" /></>,
    <><path d="M5 5h10v7H5z" fill="#667588" stroke="#fff" /><path d="M10 12v3M6 15h8M1 1v4h5V1M3 5v9h2" stroke="#fff" /></>,
    <><path d="M1 5h3l4-4v14l-4-4H1z" fill="#e8edf1" stroke="#fff" /><path d="M10 5c2 2 2 4 0 6M12 3c3 3 3 7 0 10" stroke="#fff" /></>,
];

const MinGlyph = () => <svg width="12" height="10" aria-hidden="true"><path d="M1 5h10v3H1z" fill="#fff" stroke="#4d5a6b" /></svg>;
const MaxGlyph = () => <svg width="12" height="10" aria-hidden="true"><path d="M1 1h10v8H1z" fill="#fff" stroke="#4d5a6b" /><path d="M4 4h4v2H4z" fill="#8ea3bb" stroke="#4d5a6b" /></svg>;
const RestoreGlyph = () => <svg width="12" height="10" aria-hidden="true"><path d="M4 1h7v6H4zM1 4h7v5H1z" fill="#fff" stroke="#4d5a6b" /></svg>;
const CloseGlyph = () => (
    <svg width="12" height="10" aria-hidden="true">
        <path d="m2 1 8 8M10 1 2 9" stroke="#4d4a5b" strokeWidth="4" /><path d="m2 1 8 8M10 1 2 9" stroke="#fff" strokeWidth="2" />
    </svg>
);

const Triangle = ({ d, fill = '#444' }) => <svg width="7" height="7" aria-hidden="true"><path d={d} fill={fill} /></svg>;

const ErrorDialog = () => (
    <Dialog role="alertdialog" aria-labelledby="dialog-title">
        <DialogTitle>
            <span id="dialog-title">CheckXML.exe - Неверный образ</span>
            <DialogClose aria-label="Закрыть">
                <svg width="9" height="8" aria-hidden="true"><path d="m1 0 7 8M8 0 1 8" stroke="#000" strokeWidth="2" /></svg>
            </DialogClose>
        </DialogTitle>
        <DialogBody>
            <Svg>
                <circle cx="17" cy="17" r="15" fill="#77779a" />
                <circle cx="16" cy="16" r="15" fill="#c5110c" />
                <path d="M3 12c3-13 23-13 26 0-7 5-19 5-26 0z" fill="#e9523f" />
                <path d="m9 9 14 14M23 9 9 23" stroke="#fff" strokeWidth="5" />
            </Svg>
            <Message>Приложение или библиотека C:\WINDOWS\system32\VFP8RRUS.dll не является образом программы для Windows NT. Проверьте назначение установочного диска.</Message>
        </DialogBody>
        <DialogFooter><OkButton>OK</OkButton></DialogFooter>
    </Dialog>
);

const RemoteTaskbar = () => (
    <XpBar>
        <XpStart><Svg s={20} box={20}><Flag /></Svg>пуск</XpStart>
        <XpQuick>
            <svg width="110" height="12" aria-hidden="true">
                <path d="M1 1h1M5 3h1M1 6h1M105 1h1M109 3h1" stroke="#10246b" strokeWidth="2" />
                <circle cx="20" cy="9" r="7" fill="#56a63c" /><path d="m16 8 3 3 5-5" stroke="#fff" strokeWidth="2" fill="none" />
                <circle cx="43" cy="9" r="7" fill="#fbf3c0" stroke="#e08f38" /><path d="M39 7h2M45 7h2" stroke="#c22" strokeWidth="2" />
                <path d="M58 2h16v10H58z" fill="#f7dc28" /><path d="m62 10 4-7 2 5 4-5" stroke="#1c2ab0" strokeWidth="2" fill="none" />
                <path d="m86 0 3 3-3 3M90 0l3 3-3 3" stroke="#fff" strokeWidth="1.5" fill="none" />
            </svg>
        </XpQuick>
        {xpTasks.map(([text, art, active]) => (
            <XpTask key={text} $active={active}><Svg s={16} box={16}>{art}</Svg><span>{text}</span></XpTask>
        ))}
        <XpLang>RU</XpLang>
    </XpBar>
);

const App = () => {
    return <Screen>
        <GlobalStyle />
        <BackCaption>
            <BackButton aria-label="Свернуть" />
            <BackButton aria-label="Восстановить"><RestoreGlyph /></BackButton>
            <BackButton aria-label="Закрыть"><CloseGlyph /></BackButton>
        </BackCaption>
        <Middle>
            <Gutter />
            <Window>
                <TitleBar>
                    <Eye s={16} />
                    <Title>Удаленный помощник</Title>
                    <Caption>
                        <CaptionButton aria-label="Свернуть"><MinGlyph /></CaptionButton>
                        <CaptionButton aria-label="Развернуть"><MaxGlyph /></CaptionButton>
                        <CaptionButton $close aria-label="Закрыть"><CloseGlyph /></CaptionButton>
                    </Caption>
                </TitleBar>
                <Client>
                    <View>
                        <Toolbar>
                            {tools.map(([name, art]) => (
                                <ToolButton key={name} aria-label={name}><Svg s={20} box={20}>{art}</Svg></ToolButton>
                            ))}
                        </Toolbar>
                        <Desktop>
                            <IconGrid>
                                {shortcuts.map(([col, row, Icon, label]) => (
                                    <Shortcut key={`${col}-${row}`} $col={col} $row={row}><Icon />{label}</Shortcut>
                                ))}
                            </IconGrid>
                            {ticks.map(([x, y, h]) => <Tick key={`${x}-${y}`} $x={x} $y={y} $h={h} />)}
                            <HiddenWindow />
                            <ErrorDialog />
                            <Pointer>
                                <svg width="24" height="22" aria-hidden="true">
                                    <path d="M1 0v16l4-4 3 7h2l-3-7h5z" fill="#fff" />
                                    <path d="M14 1h7M14 15h7M15 3h5v2l-2 3 2 3v2h-5v-2l2-3-2-3z" stroke="#fff" fill="none" />
                                    <path d="M16 4h3l-1 3h-1zM16 11h1v2h-1zM18 11h1v2h-1z" fill="#fff" />
                                </svg>
                            </Pointer>
                        </Desktop>
                        <RemoteTaskbar />
                    </View>
                    <VScroll>
                        <Arrow aria-label="Вверх"><Triangle d="M0 5 3.500 1 7 5z" /></Arrow>
                        <Thumb $size={857} $vertical>
                            <svg width="8" height="8" aria-hidden="true"><path d="M0 1h8M0 4h8M0 7h8" stroke="#555" /></svg>
                        </Thumb>
                        <Rest $size={18} />
                        <Arrow aria-label="Вниз"><Triangle d="M0 1h7L3.500 5z" /></Arrow>
                    </VScroll>
                    <HScroll>
                        <Arrow aria-label="Влево"><Triangle d="M5 0v7L1 3.500z" /></Arrow>
                        <Thumb $size={1048}>
                            <svg width="8" height="8" aria-hidden="true"><path d="M1 0v8M4 0v8M7 0v8" stroke="#555" /></svg>
                        </Thumb>
                        <Rest $size={164} />
                        <Arrow aria-label="Вправо"><Triangle d="M1 0v7l4-3.500z" /></Arrow>
                    </HScroll>
                    <Corner>
                        <svg width="12" height="12" aria-hidden="true">
                            <path d="M8 1h2M4 5h2M8 5h2M0 9h2M4 9h2M8 9h2" stroke="#b5b5b5" strokeWidth="2" />
                        </svg>
                    </Corner>
                </Client>
            </Window>
        </Middle>
        <BackStatus>
            <StatusCell />
            <StatusPage />
        </BackStatus>
        <Taskbar>
            <Start aria-label="Пуск">
                <Svg s={38} box={38}>
                    <circle cx="19" cy="19" r="18" fill="#174a78" stroke="#5f86a5" />
                    <path d="M3 17a16 16 0 0 1 32 0c-9 4-23 4-32 0z" fill="#5d93b8" />
                    <path d="M6 27c6-7 20-7 26 0-6 12-20 12-26 0z" fill="#2ba7d6" />
                    <g transform="translate(8 8) scale(1.150)"><Flag /></g>
                </Svg>
            </Start>
            <Pins>
                {pins.map(({ name, open, stack, art }) => (
                    <TaskButton key={name} $open={open} $stack={stack} aria-label={name}><Svg>{art}</Svg></TaskButton>
                ))}
                <TaskButton $open $active aria-label="Удаленный помощник"><Eye s={30} /></TaskButton>
            </Pins>
            <Tray>
                <Lang>RU</Lang>
                <Arrow aria-label="Скрытые значки"><Triangle d="M0 5 3.500 1 7 5z" fill="#fff" /></Arrow>
                <TrayIcons>
                    {trayIcons.map((art, i) => <Svg key={i} s={16} box={16}>{art}</Svg>)}
                </TrayIcons>
                <Clock>7:26<br />07.02.2014</Clock>
            </Tray>
            <ShowDesktop aria-label="Показать рабочий стол" />
        </Taskbar>
    </Screen>;
};

export default App;
